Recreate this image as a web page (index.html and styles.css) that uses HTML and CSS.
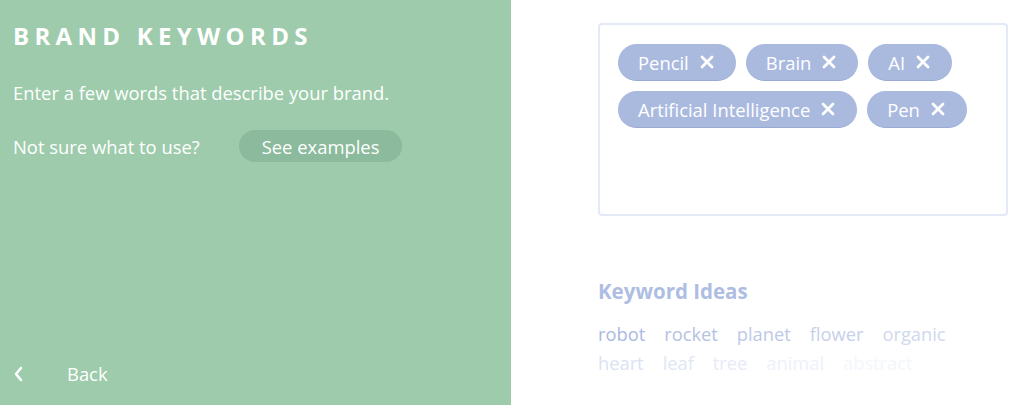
FILE: index.html
```html
<!DOCTYPE html>
<html lang="en">
<head>
  <meta charset="UTF-8" />
  <title>Brand Keywords</title>
  <link rel="stylesheet" href="styles.css">
</head>
<body>
  <div class="side">
    <h1>BRAND KEYWORDS</h1>
    <p class="intro">Enter a few words that describe your brand.</p>
    <div class="help">
      <span>Not sure what to use?</span>
      <button class="examples">See examples</button>
    </div>
    <a class="back" href="#">
      <svg width="10" height="16" viewBox="0 0 10 16"><path d="M8 2 L3 8 L8 14" fill="none" stroke="#fff" stroke-width="2.6" stroke-linecap="round" stroke-linejoin="round"/></svg>
      <span>Back</span>
    </a>
  </div>
  <div class="main">
    <div class="keyword-box">
      <span class="chip">Pencil <svg class="x" viewBox="0 0 14 14"><path d="M2 2 L12 12 M12 2 L2 12"/></svg></span>
      <span class="chip">Brain <svg class="x" viewBox="0 0 14 14"><path d="M2 2 L12 12 M12 2 L2 12"/></svg></span>
      <span class="chip">AI <svg class="x" viewBox="0 0 14 14"><path d="M2 2 L12 12 M12 2 L2 12"/></svg></span>
      <span class="chip">Artificial Intelligence <svg class="x" viewBox="0 0 14 14"><path d="M2 2 L12 12 M12 2 L2 12"/></svg></span>
      <span class="chip">Pen <svg class="x" viewBox="0 0 14 14"><path d="M2 2 L12 12 M12 2 L2 12"/></svg></span>
    </div>
    <h2>Keyword Ideas</h2>
    <div class="ideas first">
      <span class="w1">robot</span>
      <span class="w2">rocket</span>
      <span class="w3">planet</span>
      <span class="w4">flower</span>
      <span class="w5">organic</span>
    </div>
    <div class="ideas">
      <span class="w6">heart</span>
      <span class="w7">leaf</span>
      <span class="w8">tree</span>
      <span class="w9">animal</span>
      <span class="w10">abstract</span>
    </div>
  </div>
</body>
</html>
```

FILE: styles.css
```css
body {
  margin: 0;
  font-family: "Open Sans", "Liberation Sans", sans-serif;
  display: flex;
  height: 405px;
  overflow: hidden;
  background: #fff;
}
.side {
  width: 511px;
  flex-shrink: 0;
  background-color: #9dcbab;
  color: white;
  padding: 21px 13px 0;
  box-sizing: border-box;
  display: flex;
  flex-direction: column;
}
h1 {
  margin: 0;
  font-size: 24px;
  letter-spacing: 5.3px;
  font-weight: 700;
  line-height: 30px;
}
.intro {
  margin: 29px 0 0;
  font-size: 18.4px;
  line-height: 26px;
}
.help {
  margin-top: 24px;
  display: flex;
  align-items: center;
  font-size: 18.4px;
}
.examples {
  margin-left: 39px;
  height: 32px;
  padding: 0 23px;
  font-family: inherit;
  font-size: 18.4px;
  color: white;
  background-color: #8bba9c;
  border: none;
  border-radius: 16px;
}
.back {
  margin-top: auto;
  margin-bottom: 19px;
  display: flex;
  align-items: center;
  color: white;
  text-decoration: none;
  font-size: 18.4px;
}
.back span {
  margin-left: 44px;
}
.main {
  flex: 1;
  padding: 23px 16px 0 87px;
}
.keyword-box {
  height: 193px;
  box-sizing: border-box;
  border: 2px solid #e4e9f8;
  border-radius: 4px;
  padding: 19px 18px;
  display: flex;
  flex-wrap: wrap;
  align-content: flex-start;
  gap: 10px;
}
.chip {
  height: 37px;
  box-sizing: border-box;
  padding: 0 22px 0 20px;
  display: flex;
  align-items: center;
  background-color: #aabadf;
  border-bottom: 1.5px solid #9aaad4;
  border-radius: 19px;
  color: white;
  font-size: 18.4px;
}
.x {
  width: 14px;
  height: 14px;
  margin-left: 11px;
  fill: none;
  stroke: white;
  stroke-width: 2.8;
  stroke-linecap: round;
}
h2 {
  margin: 61px 0 0;
  font-size: 20.5px;
  font-weight: 700;
  color: #aebde2;
  line-height: 28px;
}
.ideas {
  display: flex;
  gap: 19px;
  font-size: 18.3px;
  line-height: 29px;
}
.ideas.first {
  margin-top: 14px;
}
.w1 { color: #aab9df; }
.w2 { color: #b4c2e4; }
.w3 { color: #bdc9e7; }
.w4 { color: #c6d0eb; }
.w5 { color: #cfd8ee; }
.w6 { color: #dbe2f3; }
.w7 { color: #e1e6f5; }
.w8 { color: #e7ebf7; }
.w9 { color: #eef1f9; }
.w10 { color: #f4f6fb; }
```
